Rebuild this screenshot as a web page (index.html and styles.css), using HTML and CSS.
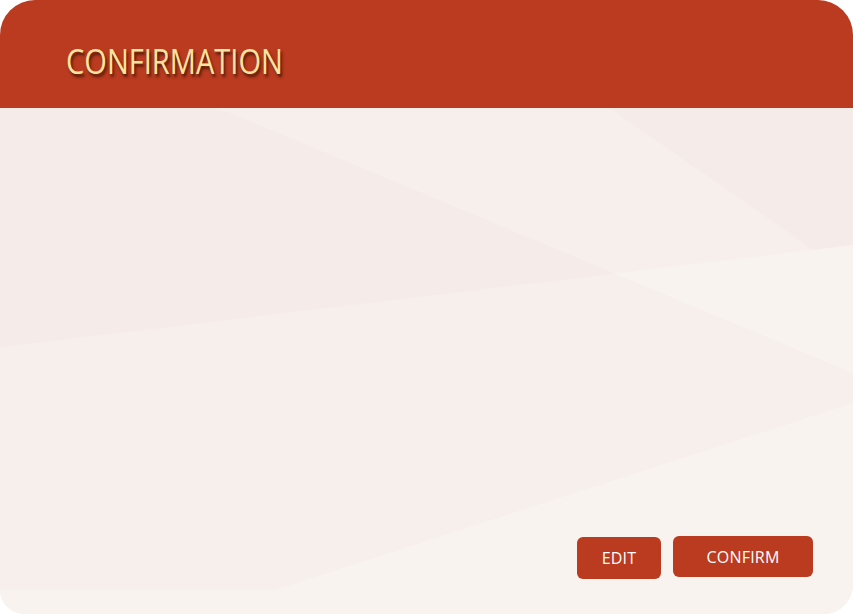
FILE: index.html
```html
<!DOCTYPE html>
<html lang="en">
<head>
<meta charset="utf-8">
<title>Confirmation</title>
<link rel="stylesheet" href="styles.css">
</head>
<body>
<div class="card">
  <header class="header">
    <h1 class="title">CONFIRMATION</h1>
  </header>
  <main class="content">
    <svg class="bg" viewBox="0 0 853 506" preserveAspectRatio="none" aria-hidden="true">
      <rect x="0" y="0" width="853" height="506" fill="#F7EFEC"/>
      <polygon points="0,0 218,0 614.6,165.5 0,239" fill="#F5EBE8"/>
      <polygon points="609,0 853,0 853,137 813.6,141.7" fill="#F5EBE8"/>
      <polygon points="614.6,165.5 853,137 853,265" fill="#F8F3EF"/>
      <polygon points="853,295 275,482 0,482 0,506 853,506" fill="#F8F3EF"/>
    </svg>
    <div class="actions">
      <button class="btn btn-edit">EDIT</button>
      <button class="btn btn-confirm">CONFIRM</button>
    </div>
  </main>
</div>
</body>
</html>
```
FILE: styles.css
```css
html, body {
  margin: 0;
  padding: 0;
  background: #ffffff;
}
.card {
  width: 853px;
  height: 614px;
  border-radius: 35px 35px 30px 25px;
  overflow: hidden;
  display: flex;
  flex-direction: column;
  background: #F7EFEC;
}
.header {
  height: 108px;
  flex: 0 0 108px;
  background: #BA3B1F;
  box-sizing: border-box;
  padding-left: 66px;
  padding-top: 39px;
}
.title {
  margin: 0;
  display: inline-block;
  font-family: "Open Sans", "DejaVu Sans", sans-serif;
  font-weight: 400;
  font-size: 35px;
  line-height: 44px;
  color: #FDE3A0;
  text-shadow: 2px 3px 3px rgba(60, 20, 5, 0.85);
  transform: scaleX(0.83);
  transform-origin: left center;
}
.content {
  flex: 1;
  position: relative;
  display: flex;
  flex-direction: column;
  justify-content: flex-end;
  align-items: flex-end;
  padding: 0 40px 35px 0;
}
.bg {
  position: absolute;
  left: 0;
  top: 0;
  width: 100%;
  height: 100%;
}
.actions {
  position: relative;
  display: flex;
  gap: 12px;
  align-items: flex-start;
}
.btn {
  border: none;
  background: #BA3B1F;
  color: #ffffff;
  font-family: "Open Sans", "DejaVu Sans", sans-serif;
  font-size: 16px;
  letter-spacing: 0.2px;
  padding: 0;
  border-radius: 6px;
  cursor: pointer;
}
.btn-edit {
  width: 84px;
  height: 42px;
  margin-top: 1px;
}
.btn-confirm {
  width: 140px;
  height: 41px;
}
```
